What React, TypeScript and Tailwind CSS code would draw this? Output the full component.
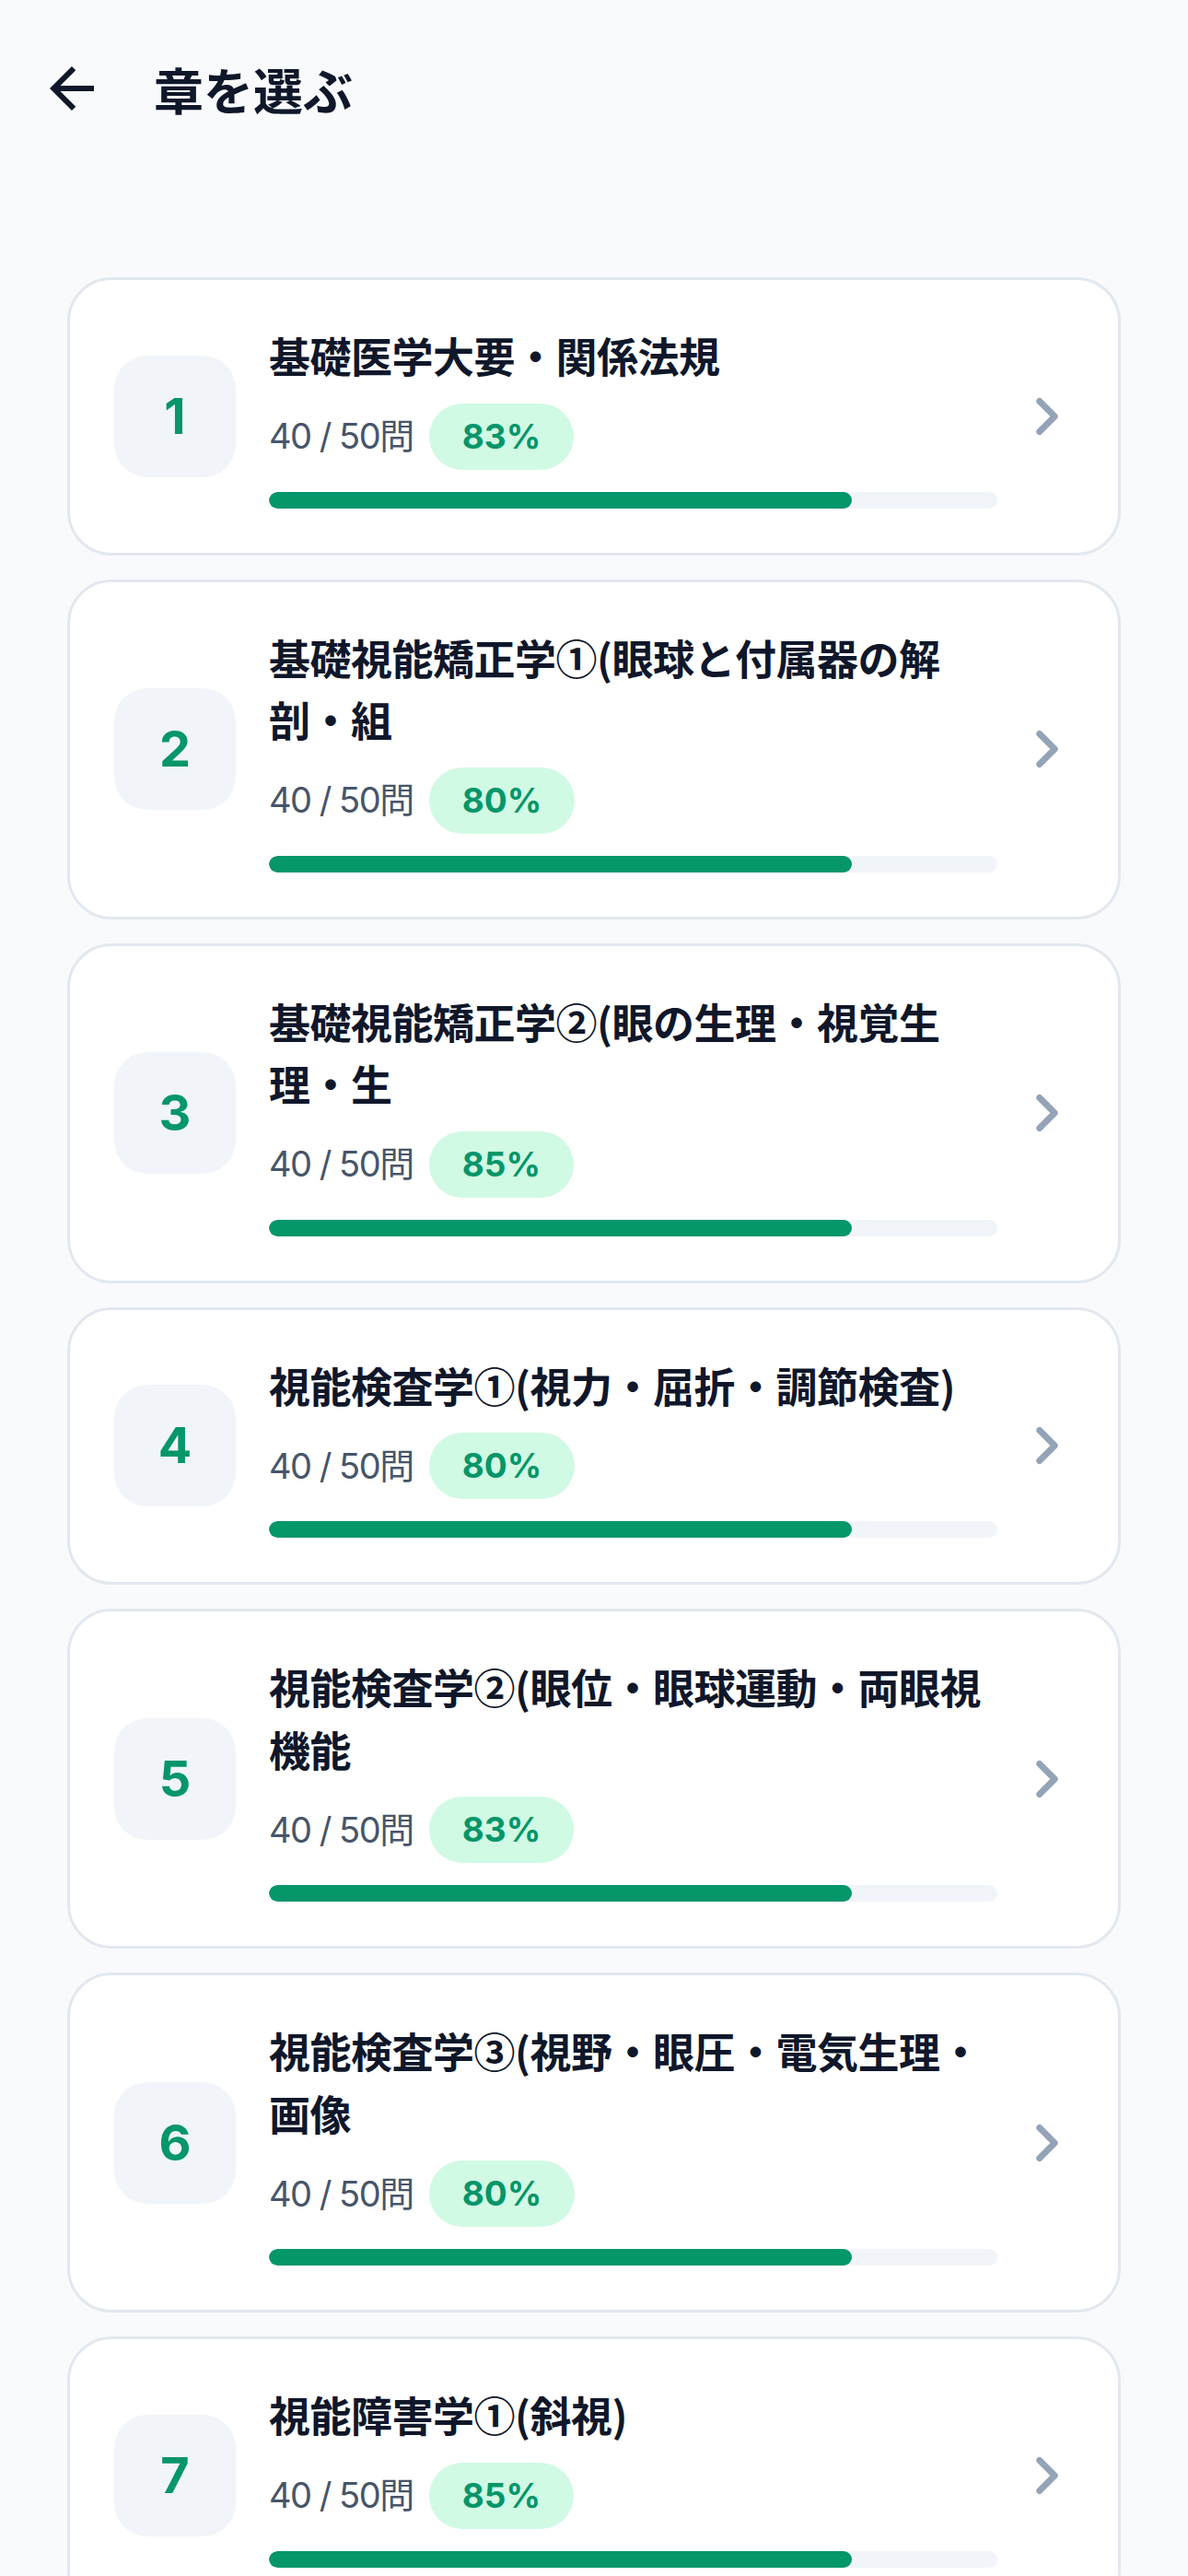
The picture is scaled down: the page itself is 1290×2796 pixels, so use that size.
import React from 'react';
import { MdArrowBack } from 'react-icons/md';
import { ChevronRight } from 'lucide-react';

interface Chapter {
  id: number;
  title: string;
  answered: number;
  total: number;
  accuracy: number;
}

const chapters: Chapter[] = [
  { id: 1, title: '基礎医学大要・関係法規', answered: 40, total: 50, accuracy: 83 },
  { id: 2, title: '基礎視能矯正学①(眼球と付属器の解剖・組', answered: 40, total: 50, accuracy: 80 },
  { id: 3, title: '基礎視能矯正学②(眼の生理・視覚生理・生', answered: 40, total: 50, accuracy: 85 },
  { id: 4, title: '視能検査学①(視力・屈折・調節検査)', answered: 40, total: 50, accuracy: 80 },
  { id: 5, title: '視能検査学②(眼位・眼球運動・両眼視機能', answered: 40, total: 50, accuracy: 83 },
  { id: 6, title: '視能検査学③(視野・眼圧・電気生理・画像', answered: 40, total: 50, accuracy: 80 },
  { id: 7, title: '視能障害学①(斜視)', answered: 40, total: 50, accuracy: 85 },
];

const ChapterCard: React.FC<{ chapter: Chapter }> = ({ chapter }) => {
  const progress = (chapter.answered / chapter.total) * 100;
  return (
    <button className="w-full flex items-center text-left bg-white border-[3px] border-[#e2e8f0] rounded-[48px] pl-[48px] pr-[44px] py-[48px]">
      <div className="w-[132px] h-[132px] shrink-0 rounded-[36px] bg-[#f1f5f9] flex items-center justify-center">
        <span className="text-[54px] font-bold text-[#059669] leading-none">{chapter.id}</span>
      </div>
      <div className="flex-1 min-w-0 ml-[36px]">
        <h3
          className="text-[45px] leading-[67.5px] font-bold text-[#0f172a] tracking-[-0.5px]"
          style={{ fontFamily: '"Noto Sans CJK JP", sans-serif' }}
        >
          {chapter.title}
        </h3>
        <div className="flex items-center gap-[17px] mt-[18px]">
          <span className="text-[38px] tracking-[-1.5px] text-[#475569]">
            {chapter.answered} / {chapter.total}問
          </span>
          <span className="h-[72px] px-[36px] rounded-full bg-[#d1fae5] text-[#059669] text-[37px] font-bold flex items-center">
            {chapter.accuracy}%
          </span>
        </div>
        <div className="mt-[24px] h-[18px] rounded-full bg-[#f1f5f9] overflow-hidden">
          <div className="h-full rounded-full bg-[#059669]" style={{ width: `${progress}%` }} />
        </div>
      </div>
      <ChevronRight className="shrink-0 ml-[21px] text-[#94a3b8]" size={66} strokeWidth={2.5} />
    </button>
  );
};

export default function App() {
  return (
    <div
      className="min-h-screen bg-[#f8fafc]"
      style={{ fontFamily: 'Inter, "Noto Sans CJK JP", sans-serif' }}
    >
      <header className="h-[192px] flex items-center pl-[42px]">
        <button className="w-[72px] h-[72px] flex items-center justify-center text-[#0f172a]">
          <MdArrowBack size={72} />
        </button>
        <h1
          className="ml-[53px] text-[54px] font-bold text-[#0f172a]"
          style={{ fontFamily: '"Noto Sans CJK JP", sans-serif' }}
        >
          章を選ぶ
        </h1>
      </header>
      <main className="px-[73px] pt-[109px] pb-[72px] flex flex-col gap-[26px]">
        {chapters.map((c) => (
          <ChapterCard key={c.id} chapter={c} />
        ))}
      </main>
    </div>
  );
}
